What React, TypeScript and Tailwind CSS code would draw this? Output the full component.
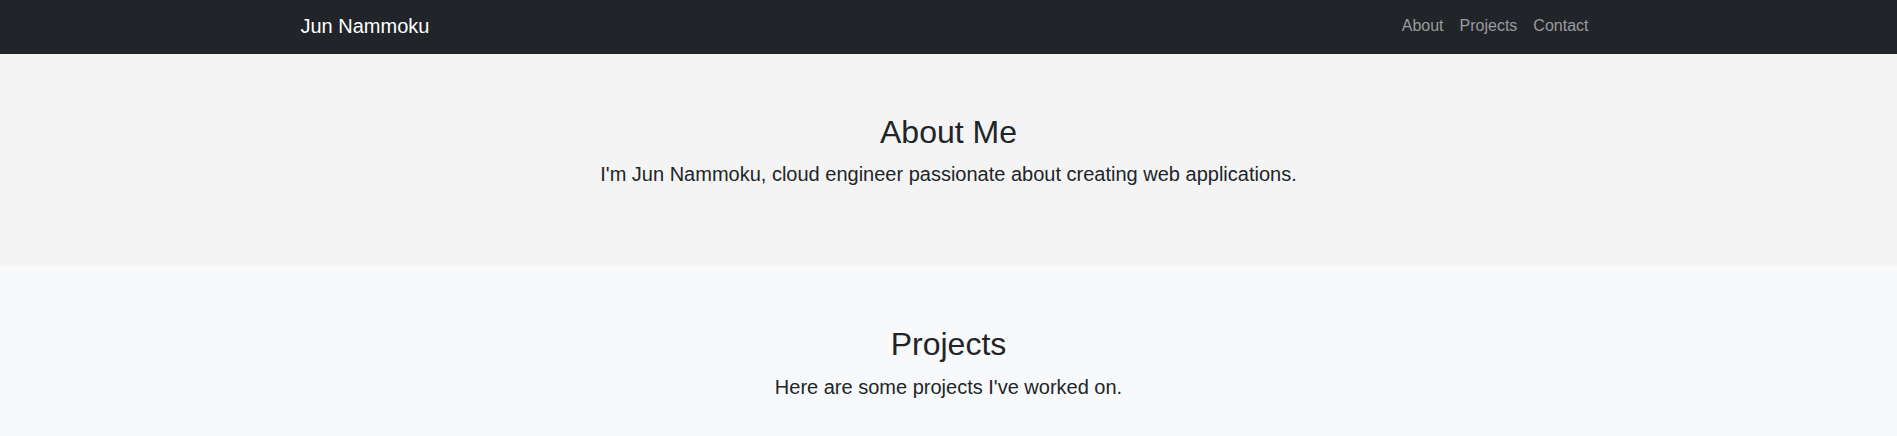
const App = () => {
  const links = ['About', 'Projects', 'Contact'];

  return (
    <div className="min-h-screen bg-[#f8f9fa] text-[#212529] font-['Liberation_Sans',Arial,sans-serif]">
      {/* Navbar */}
      <nav className="bg-[#212529] h-[54px]">
        <div className="max-w-[1320px] mx-auto px-3 h-full pb-[2px] flex items-center justify-between">
          <a href="#" className="text-white text-[20px] leading-[30px]">Jun Nammoku</a>
          <ul className="flex items-center">
            {links.map((link) => (
              <li key={link}>
                <a href={`#${link.toLowerCase()}`} className="block px-2 py-2 text-base leading-6 text-[#9a9b9d]">
                  {link}
                </a>
              </li>
            ))}
          </ul>
        </div>
      </nav>

      {/* About */}
      <section id="about" className="bg-[#f4f4f4] pt-[59px] pb-[61px]">
        <div className="max-w-[1320px] mx-auto px-3 text-center">
          <h2 className="text-[32px] leading-[1.2] font-normal mb-2">About Me</h2>
          <p className="text-[20px] leading-[30px] mb-4">
            I'm Jun Nammoku, cloud engineer passionate about creating web applications.
          </p>
        </div>
      </section>

      {/* Projects */}
      <section id="projects" className="bg-[#f8f9fa] pt-[59px] pb-[61px]">
        <div className="max-w-[1320px] mx-auto px-3 text-center">
          <h2 className="text-[32px] leading-[1.2] font-normal mb-2">Projects</h2>
          <p className="text-[20px] leading-[30px] mb-4">Here are some projects I've worked on.</p>
        </div>
      </section>
    </div>
  );
};

export default App;
